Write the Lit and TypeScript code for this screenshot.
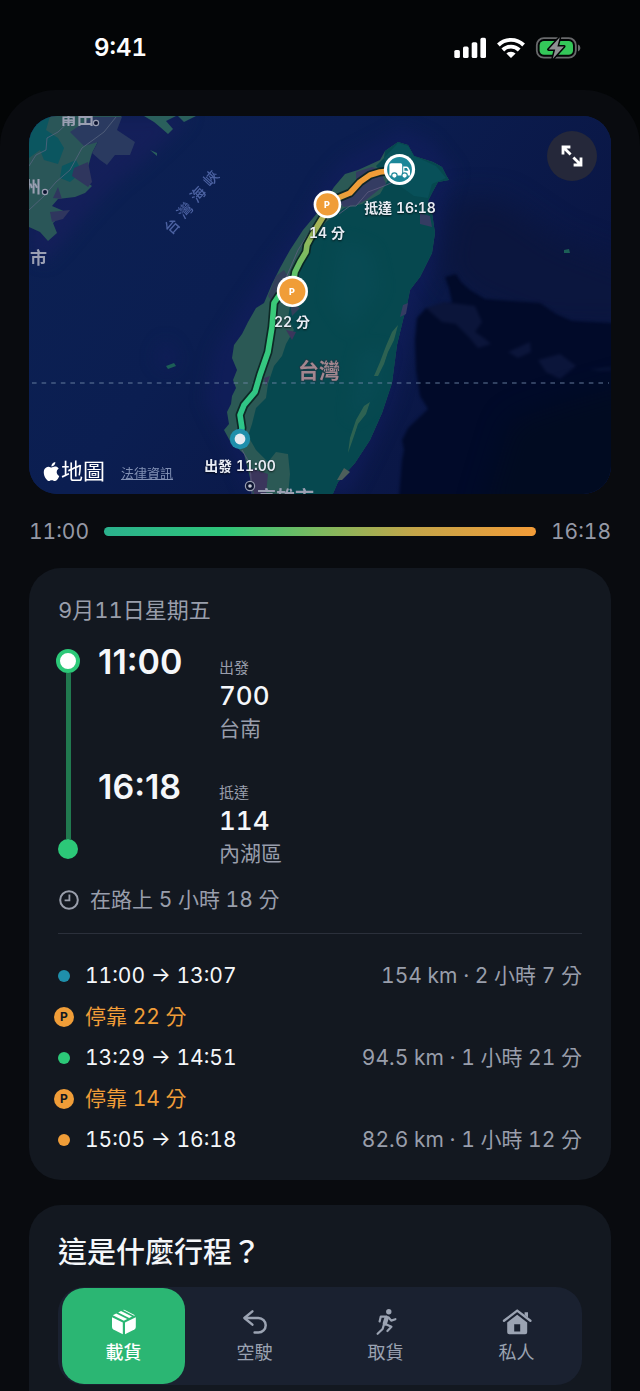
import { LitElement, html, svg, css } from 'lit';
import { customElement, state } from 'lit/decorators.js';
import { classMap } from 'lit/directives/class-map.js';

interface Stop {
  time: string;
  label: string;
  code: string;
  place: string;
}

interface Leg {
  kind: 'teal' | 'green' | 'orange' | 'pause';
  text: string;
  detail?: string;
}

const STOPS: Stop[] = [
  { time: '11:00', label: '出發', code: '700', place: '台南' },
  { time: '16:18', label: '抵達', code: '114', place: '內湖區' },
];

const LEGS: Leg[] = [
  { kind: 'teal', text: '11:00 → 13:07', detail: '154 km · 2 小時 7 分' },
  { kind: 'pause', text: '停靠 22 分' },
  { kind: 'green', text: '13:29 → 14:51', detail: '94.5 km · 1 小時 21 分' },
  { kind: 'pause', text: '停靠 14 分' },
  { kind: 'orange', text: '15:05 → 16:18', detail: '82.6 km · 1 小時 12 分' },
];

const boxIcon = svg`
  <g fill="currentColor">
    <path d="M3 10.2 13.8 15.6V27.2L4.4 22.4Q3 21.6 3 20Z" />
    <path d="M26.8 10.2 16 15.6V27.2L25.4 22.4Q26.8 21.6 26.8 20Z" />
    <path d="M3.8 8.2 7.2 6.4 18.2 12 14.9 13.7Z" />
    <path d="M9.2 5.4 12 4 23 9.6 20.2 11Z" />
    <path d="M14 3Q14.9 2.4 15.8 2.9L26 8.2 25 8.7Z" />
  </g>
`;

const backIcon = svg`
  <g fill="none" stroke="currentColor" stroke-width="2.5" stroke-linecap="round" stroke-linejoin="round">
    <path d="M12.4 4.4 4.4 11 12.4 17.6" />
    <path d="M5 11H18.4a7.2 7.2 0 0 1 0 14.6H14.6" />
  </g>
`;

const runIcon = svg`
  <circle cx="17.8" cy="4.8" r="2.7" fill="currentColor" />
  <g fill="none" stroke="currentColor" stroke-width="2.2" stroke-linecap="round" stroke-linejoin="round">
    <path d="M15.6 9.6H9.8L8.6 14.4" />
    <path d="M17.6 10.4 20.2 13.6 24.4 12.2" />
    <path d="M15.4 17.4 20.4 19.8 16.4 24" />
    <path d="M12.6 18.6 11.6 22 6.6 26.8" />
    <path d="M15.6 11 13.8 16.6" stroke-width="4.4" />
  </g>
`;

const homeIcon = svg`
  <path
    d="M2 13.8 15.2 3.6 28.4 13.8"
    fill="none"
    stroke="currentColor"
    stroke-width="2.4"
    stroke-linecap="round"
    stroke-linejoin="round"
  />
  <path d="M22.6 5.2H26V10.6L22.6 8Z" fill="currentColor" />
  <path
    fill="currentColor"
    fill-rule="evenodd"
    d="M15.2 7.8 25.2 15.4V25.2Q25.2 27.2 23.2 27.2H7.2Q5.2 27.2 5.2 25.2V15.4ZM12.2 17.2V24.4H18.2V17.2Z"
  />
`;

const KINDS = [
  { id: 'load', label: '載貨', icon: boxIcon },
  { id: 'empty', label: '空駛', icon: backIcon },
  { id: 'pickup', label: '取貨', icon: runIcon },
  { id: 'private', label: '私人', icon: homeIcon },
];

@customElement('status-bar')
export class StatusBar extends LitElement {
  static styles = css`
    :host {
      display: flex;
      align-items: center;
      justify-content: space-between;
      height: 90px;
      padding: 5px 59px 0 94px;
      box-sizing: border-box;
      color: #fff;
    }
    .clock {
      font-size: 24px;
      font-weight: 600;
      line-height: 30px;
    }
    .icons {
      display: flex;
      align-items: center;
      gap: 10px;
    }
    svg {
      display: block;
    }
  `;

  render() {
    return html`
      <time class="clock">9:41</time>
      <div class="icons">
        <svg width="33" height="22" viewBox="0 0 33 22" fill="#fff" role="img" aria-label="Signal">
          <rect x="0.3" y="13" width="5.6" height="8" rx="1.6" />
          <rect x="9" y="9.6" width="5.6" height="11.4" rx="1.6" />
          <rect x="17.7" y="5.2" width="5.6" height="15.8" rx="1.6" />
          <rect x="26.4" y="0.8" width="5.6" height="20.2" rx="1.6" />
        </svg>
        <svg width="28" height="22" viewBox="0 0 28 22" role="img" aria-label="Wi-Fi">
          <g fill="none" stroke="#fff" stroke-width="3.9">
            <path d="M1.4 8a18 18 0 0 1 25.2 0" />
            <path d="M5.8 13a11.6 11.6 0 0 1 16.4 0" />
          </g>
          <path d="M14 21 9.4 16.6a6.5 6.5 0 0 1 9.2 0Z" fill="#fff" />
        </svg>
        <svg width="46" height="24" viewBox="0 0 46 24" role="img" aria-label="Battery">
          <rect x="1.8" y="2.2" width="39" height="19.4" rx="7" fill="none" stroke="#68696b" stroke-width="1.8" />
          <path d="M43 8.6a3.6 3.6 0 0 1 0 6.8Z" fill="#68696b" />
          <rect x="4.6" y="5" width="33.4" height="13.8" rx="4.4" fill="#34c759" />
          <path
            d="M24.8 1.2 13.6 13.4H20.2L17.8 22.8 29 10.4H22.4Z"
            fill="#8e9092"
            stroke="#030506"
            stroke-width="3"
            stroke-linejoin="round"
            paint-order="stroke"
          />
        </svg>
      </div>
    `;
  }
}

@customElement('route-map')
export class RouteMap extends LitElement {
  static styles = css`
    :host {
      display: block;
      position: relative;
      overflow: hidden;
      border-radius: 28px;
      background: #0b1f50;
    }
    .canvas {
      display: block;
      width: 100%;
      height: auto;
    }
    .place {
      fill: #9a9fb2;
      font-size: 17px;
      font-weight: 600;
    }
    .city {
      font-size: 19px;
    }
    .strait {
      fill: #4c62a2;
      font-size: 15px;
      font-weight: 500;
      text-anchor: middle;
    }
    .island {
      fill: #a3868f;
      stroke: #173d48;
      stroke-width: 2px;
      paint-order: stroke;
      font-size: 21px;
      font-weight: 700;
      text-anchor: middle;
    }
    .pin {
      fill: #e8ecf4;
      font-size: 14px;
      font-weight: 600;
      text-anchor: middle;
      text-shadow: 0 1px 2px rgba(0, 0, 0, 0.7);
    }
    .letter {
      fill: #fff;
      font-size: 9px;
      font-weight: 800;
      text-anchor: middle;
    }
    .expand {
      position: absolute;
      top: 15px;
      right: 14px;
      width: 50px;
      height: 50px;
      padding: 0;
      border: 0;
      border-radius: 50%;
      background: #25283a;
      color: #fff;
      display: grid;
      place-items: center;
    }
    .credit {
      position: absolute;
      left: 14px;
      bottom: 6px;
      display: flex;
      align-items: center;
      gap: 16px;
      line-height: 30px;
    }
    .brand {
      display: flex;
      align-items: center;
      gap: 1px;
      color: #fff;
      font-size: 22px;
    }
    .legal {
      color: #8190b4;
      font-size: 13px;
      padding-top: 4px;
    }
    filter {
      color-interpolation-filters: sRGB;
    }
  `;

  private renderSea() {
    return svg`
      <rect x="29" y="116" width="582" height="378" fill="url(#sea)" />
      <g filter="url(#soft)">
        <path fill="#171f5c" opacity=".75" d="M29 116H190L170 138 140 165 118 182 100 200 80 222 62 244 45 262 29 250Z" />
        <path fill="#131d62" opacity=".5" d="M325 180 345 158 385 138 400 128 430 140 455 172 445 205 440 260 420 300 405 360 395 400 372 450 350 494H250L225 440 205 400 215 350 240 310 270 265 300 225Z" />
        <path fill="#131b5c" opacity=".5" d="M154 358 165 340 176 352 178 364 166 372Z" />
      </g>
      <g filter="url(#haze)">
        <path fill="#0b163e" d="M455 200 500 200 560 240 640 270V330L540 328 470 300 440 270Z" />
      </g>
      <g filter="url(#edge)">
        <path fill="#010a29" d="M445 277 456 274 461 282 470 290 485 299 510 301 540 303 556 314 572 321 630 324V510H398L402 460 404 450 402 440 408 428 428 409 420 396 416 370 415 340 417 318 426 308 452 302 449 288Z" />
        <path fill="#0b153a" d="M426 308 444 302 475 306 482 322 475 332 484 338 491 344 478 348 468 336 456 324 442 322Z" />
        <path fill="#0b153a" d="M508 352 530 342 531 352 518 358Z" />
        <path fill="#0b153a" d="M538 360 560 354 576 366 560 379 546 372Z" />
        <path fill="#0b153a" opacity=".7" d="M588 369 611 367V371L600 371Z" />
      </g>
      <path fill="#010c1e" opacity=".7" filter="url(#haze)" d="M510 420 570 400 640 380V520H480Z" />
    `;
  }

  private renderLand() {
    return svg`
      <path fill="#2a5658" d="M29 116H122L104 130 92 153 88 167 74 172 92 186 85 193 75 197 58 199 52 206 66 212 53 223 57 233 48 241 40 232 29 227Z" />
      <path fill="#0b5660" d="M29 116H50L46 130 58 138 64 148 58 164 44 160 40 150 29 158Z" />
      <path fill="#0b5660" d="M62 166 76 160 82 172 70 182 60 178Z" />
      <path fill="#2a3a60" d="M92 117H122L117 130 135 142 130 155 115 155 107 165 100 160 92 153 98 142 84 146 70 132Z" />
      <path fill="#2f365e" d="M74 168 88 162 92 182 88 187 72 176ZM53 198 58 187 62 199ZM50 212 70 210 63 219 52 222Z" />
      <path fill="#2a5f5c" d="M144 116H176L166 121 173 129 168 134 160 127 154 122ZM178 116H196L184 122ZM150 150 157 153 157 156Z" />
      <g fill="none" stroke="#57647f" stroke-width=".8">
        <path d="M29 166 36 155 46 150 47 138 58 132 74 117" />
        <path d="M29 210 44 196 56 182 70 170 82 148 104 132 116 117" />
      </g>

      <path
        fill="#2b5955"
        d="M398 142 408 145 414 156 433 162 442 167 446 175 449 180 438 182 432 193 428 201 432 213 435 233 432 253 420 277 410 290 407 305 403 320 397 345 392 383 382 413 370 440 355 463 338 482 332 496H253L250 478 244 454 230 441 224 430 229 424 227 412 231 404 232 396 236 388 233 380 237 370 232 358 234 345 242 334 248 322 256 308 264 303 272 284 280 268 290 250 303 230 318 212 334 187 345 174 358 170 380 160 385 151Z"
      />
      <path
        fill="#06484f"
        d="M398 142 408 145 414 156 433 162 442 167 446 175 449 180 438 182 432 193 428 201 432 213 435 233 432 253 420 277 410 290 407 305 403 320 397 345 392 383 382 413 370 440 355 463 338 482 332 496H288L290 474 288 454 276 452 268 462 256 450 248 436 252 424 256 408 266 398 268 384 274 366 282 356 286 344 294 330 288 318 290 306 296 290 300 270 306 256 312 240 326 222 344 208 362 204 380 194 388 180 376 166 384 158 385 151Z"
      />
      <path fill="#085059" d="M384 158 398 143 408 146 414 156 436 166 446 178 432 184 428 198 414 196 400 186 388 176Z" />
      <path fill="#343c62" d="M356 172 372 167 380 170 386 184 366 200 356 205 344 207 338 202 350 192 356 182Z" />
      <path fill="#343c62" d="M420 213 430 216 432 227 420 224ZM403 305 408 303 406 314 400 317Z" />
      <path fill="#33405a" d="M276 276 284 270 290 280 282 296 274 304 268 296ZM290 302 300 308 292 316Z" />
      <path fill="#3b365c" d="M286 330 296 332 292 340ZM264 378 270 376 266 386ZM250 468 268 474 266 494H254L250 478Z" />
      <path fill="#0a4d58" opacity=".5" d="M340 240 372 250 380 290 350 330 330 300ZM360 350 388 350 374 400 350 420Z" filter="url(#soft)" />
      <path fill="#3f6d53" d="M398 325 394 340 388 352 384 364 378 376 374 376 380 362 386 346 392 332Z" opacity=".7" />
      <path fill="#3f6d53" d="M370 402 366 414 358 424 354 436 348 453 350 438 356 420 364 406Z" opacity=".7" />
      <path fill="#4d5f5b" d="M337 480 344 468 350 472 342 480Z" />
      <g fill="none" stroke="#5f5d80" stroke-width=".8">
        <path d="M339 214 350 206 356 206 368 192 384 186 398 180" />
        <path d="M316 222 298 250 286 278" />
        <path d="M242 450 250 464 252 494" />
      </g>
      <path fill="#1c5f56" d="M166 366 174 363 176 366 168 369ZM564 250 569 249 570 253 564 253Z" />
    `;
  }

  private renderLabels() {
    return svg`
      <text class="place" x="60" y="124">莆田</text>
      <text class="place" x="24" y="193">州</text>
      <text class="place" x="30" y="264">市</text>
      <text class="place city" x="257" y="505">高雄市</text>
      <g fill="#0c1430" stroke="#9a9fb2" stroke-width="1.2">
        <circle cx="96" cy="123" r="2.6" />
        <circle cx="45" cy="192" r="2.6" />
        <circle cx="250" cy="486" r="4.6" />
      </g>
      <circle cx="250" cy="486" r="1.8" fill="#c4c8d4" />
      <text class="strait" transform="translate(176 230) rotate(-48)">台</text>
      <text class="strait" transform="translate(189 214) rotate(-48)">灣</text>
      <text class="strait" transform="translate(202 198) rotate(-48)">海</text>
      <text class="strait" transform="translate(215 182) rotate(-48)">峽</text>
      <text class="island" x="319" y="378">台灣</text>
      <path d="M32 383H609" stroke="#6f86a6" stroke-width="1.4" stroke-dasharray="4.6 5" opacity=".6" />
    `;
  }

  private renderRoute() {
    const path =
      'M240 439 242 428 240 415 244 405 255 392 260 375 268 352 272 327 274 303 280 294 292 291 ' +
      '295 272 300 262 306 252 307 245 315 230 323 217 327 204 338 198 350 193 360 182 370 175 380 172 399 170';
    return svg`
      <path d="${path}" fill="none" stroke="#08211f" stroke-width="9" stroke-linejoin="round" opacity=".85" />
      <path d="${path}" fill="none" stroke="url(#route)" stroke-width="5.6" stroke-linejoin="round" />

      <circle cx="240" cy="439" r="10.2" fill="#1f8fab" />
      <circle cx="240" cy="439" r="5.4" fill="#e6ebf0" />

      <circle cx="292.4" cy="291.4" r="15.6" fill="#fff" />
      <circle cx="292.4" cy="291.4" r="13" fill="#f09d38" />
      <text class="letter" x="292" y="295">P</text>

      <circle cx="327.4" cy="204.4" r="13.8" fill="#fff" />
      <circle cx="327.4" cy="204.4" r="11.2" fill="#f09d38" />
      <text class="letter" x="327" y="208">P</text>

      <circle cx="399.5" cy="169.5" r="15.6" fill="#fff" />
      <circle cx="399.5" cy="169.5" r="12.4" fill="#1c8799" />
      <g fill="#fff">
        <path d="M389.4 165Q389.4 163.2 391.2 163.2H400.6Q402.2 163.2 402.2 165V175.6H389.4Z" />
        <path fill-rule="evenodd" d="M403.2 166.6H406.4Q407.6 166.6 408.4 167.6L410 170.4V175.6H403.2ZM404.4 168V170.8H408.4L406.8 168Z" />
      </g>
      <g fill="#fff" stroke="#1c8799" stroke-width="1.1">
        <circle cx="394.4" cy="175.6" r="2.7" />
        <circle cx="404.6" cy="175.6" r="2.7" />
      </g>

      <text class="pin" x="400" y="213">抵達 16:18</text>
      <text class="pin" x="327" y="238">14 分</text>
      <text class="pin" x="292" y="327">22 分</text>
      <text class="pin" x="240" y="471">出發 11:00</text>
    `;
  }

  render() {
    return html`
      <svg class="canvas" viewBox="29 116 582 378" role="img" aria-label="台灣">
        <defs>
          <linearGradient id="sea" x1="0" y1="0" x2="1" y2="0.5">
            <stop offset="0" stop-color="#0c2153" />
            <stop offset="0.45" stop-color="#0b1e51" />
            <stop offset="1" stop-color="#0a1543" />
          </linearGradient>
          <linearGradient id="route" gradientUnits="userSpaceOnUse" x1="240" y1="439" x2="350" y2="193">
            <stop offset="0" stop-color="#2cc48a" />
            <stop offset="0.55" stop-color="#3ccb77" />
            <stop offset="0.7" stop-color="#77bd62" />
            <stop offset="0.86" stop-color="#a9b356" />
            <stop offset="1" stop-color="#f09d38" />
          </linearGradient>
          <filter id="haze" x="-30%" y="-30%" width="160%" height="160%"><feGaussianBlur stdDeviation="14" /></filter>
          <filter id="soft" x="-30%" y="-30%" width="160%" height="160%"><feGaussianBlur stdDeviation="8" /></filter>
          <filter id="edge"><feGaussianBlur stdDeviation="1.4" /></filter>
        </defs>
        ${this.renderSea()} ${this.renderLand()} ${this.renderLabels()} ${this.renderRoute()}
      </svg>
      <button class="expand" aria-label="展開地圖">
        <svg width="24" height="24" viewBox="0 0 24 24" fill="none" stroke="currentColor" stroke-width="2.8">
          <path d="M3 10.4V3H10.4M3 3 10.6 10.6" />
          <path d="M21 13.6V21H13.6M21 21 13.4 13.4" />
        </svg>
      </button>
      <div class="credit">
        <span class="brand">
          <svg width="17" height="19" viewBox="2 0 20 24" fill="currentColor" aria-hidden="true">
            <path
              d="M12.152 6.896c-.948 0-2.415-1.078-3.96-1.04-2.04.027-3.91 1.183-4.961 3.014-2.117 3.675-.546 9.103 1.519 12.09 1.013 1.454 2.208 3.09 3.792 3.039 1.52-.065 2.09-.987 3.935-.987 1.831 0 2.35.987 3.96.948 1.637-.026 2.676-1.48 3.676-2.948 1.156-1.688 1.636-3.325 1.662-3.415-.039-.013-3.182-1.221-3.22-4.857-.026-3.04 2.48-4.494 2.597-4.559-1.429-2.09-3.623-2.324-4.39-2.376-2-.156-3.675 1.09-4.61 1.09zM15.53 3.83c.843-1.012 1.4-2.427 1.245-3.83-1.207.052-2.662.805-3.532 1.818-.78.896-1.454 2.338-1.273 3.714 1.338.104 2.715-.688 3.559-1.701"
            />
          </svg>
          地圖
        </span>
        <a class="legal" href="#legal">法律資訊</a>
      </div>
    `;
  }
}

@customElement('trip-card')
export class TripCard extends LitElement {
  static styles = css`
    :host {
      display: block;
      padding: 28px 29px 20px;
      border-radius: 32px;
      background: #131820;
      color: #f5f7fa;
      font-size: 21px;
      line-height: 28px;
    }
    ol,
    ul {
      list-style: none;
      margin: 0;
      padding: 0;
    }
    .muted {
      color: #999eab;
    }
    .date {
      font-size: 22px;
    }
    .trip {
      display: flex;
      gap: 20px;
      margin-top: 21px;
    }
    .rail {
      display: flex;
      flex-direction: column;
      align-items: center;
      width: 20px;
      padding: 4px 0 11px;
    }
    .from {
      width: 16px;
      height: 16px;
      border: 4px solid #2cc878;
      border-radius: 50%;
      background: #fff;
    }
    .line {
      flex: 1;
      width: 5px;
      background: #21794f;
    }
    .to {
      width: 20px;
      height: 20px;
      border-radius: 50%;
      background: #2cc878;
    }
    .stops {
      display: grid;
      gap: 25px;
    }
    .stop {
      display: grid;
      grid-template-columns: 121px auto;
    }
    .time {
      font-size: 34px;
      font-weight: 600;
      line-height: 34px;
      font-variant-numeric: normal;
    }
    .where {
      display: flex;
      flex-direction: column;
      padding-top: 12px;
    }
    .label {
      font-size: 15px;
      line-height: 22px;
    }
    .code {
      font-size: 26px;
      font-weight: 500;
      line-height: 34px;
    }
    .town {
      line-height: 32px;
    }
    .duration {
      display: flex;
      align-items: center;
      gap: 10px;
      margin-top: 16px;
    }
    .legs {
      margin-top: 19px;
      padding-top: 21px;
      border-top: 1px solid #2b303b;
    }
    .leg {
      display: flex;
      align-items: center;
      gap: 11px;
      height: 41px;
      margin-left: -4px;
    }
    .mark {
      display: grid;
      place-items: center;
      width: 20px;
      height: 20px;
    }
    .mark::before {
      content: '';
      width: 12px;
      height: 12px;
      border-radius: 50%;
      background: #1f8fab;
    }
    .green .mark::before {
      background: #2cc878;
    }
    .orange .mark::before {
      background: #f09d38;
    }
    .pause {
      color: #f09d38;
    }
    .pause .mark {
      border-radius: 50%;
      background: #f09d38;
      color: #131820;
      font-size: 12px;
      font-weight: 700;
      line-height: 20px;
    }
    .pause .mark::before {
      content: none;
    }
    .detail {
      margin-left: auto;
    }
  `;

  render() {
    return html`
      <div class="date muted">9月11日星期五</div>
      <div class="trip">
        <div class="rail">
          <span class="from"></span>
          <span class="line"></span>
          <span class="to"></span>
        </div>
        <ol class="stops">
          ${STOPS.map(
            (stop) => html`
              <li class="stop">
                <time class="time">${stop.time}</time>
                <div class="where">
                  <span class="label muted">${stop.label}</span>
                  <span class="code">${stop.code}</span>
                  <span class="town muted">${stop.place}</span>
                </div>
              </li>
            `
          )}
        </ol>
      </div>
      <div class="duration muted">
        <svg width="22" height="22" viewBox="0 0 22 22" fill="none" stroke="currentColor" stroke-width="2">
          <circle cx="11" cy="11" r="8.8" />
          <path d="M11.4 5.6V11.4H6.6" stroke-width="1.8" />
        </svg>
        在路上 5 小時 18 分
      </div>
      <ul class="legs">
        ${LEGS.map(
          (leg) => html`
            <li class="leg ${leg.kind}">
              <span class="mark">${leg.kind === 'pause' ? 'P' : ''}</span>
              <span>${leg.text}</span>
              ${leg.detail ? html`<span class="detail muted">${leg.detail}</span>` : ''}
            </li>
          `
        )}
      </ul>
    `;
  }
}

@customElement('kind-card')
export class KindCard extends LitElement {
  static styles = css`
    :host {
      display: block;
      padding: 29px 29px 6px;
      border-radius: 32px 32px 0 0;
      background: #131820;
      color: #f5f7fa;
    }
    h2 {
      margin: 0 0 15px;
      font-size: 29px;
      font-weight: 500;
      line-height: 38px;
    }
    .kinds {
      display: grid;
      grid-template-columns: repeat(4, 1fr);
      border-radius: 26px;
      background: #1a2130;
    }
    .kind {
      display: flex;
      flex-direction: column;
      align-items: center;
      justify-content: center;
      gap: 3px;
      height: 96px;
      margin: 1px 4px;
      padding: 0;
      border: 0;
      border-radius: 22px;
      background: none;
      color: #9ba3b2;
      font: inherit;
      font-size: 18px;
      line-height: 26px;
    }
    .active {
      background: #2bb673;
      color: #fff;
      font-weight: 500;
    }
  `;

  @state() private selected = 'load';

  render() {
    return html`
      <h2>這是什麼行程？</h2>
      <div class="kinds">
        ${KINDS.map(
          (kind) => html`
            <button
              class=${classMap({ kind: true, active: this.selected === kind.id })}
              aria-pressed=${this.selected === kind.id}
              @click=${() => (this.selected = kind.id)}
            >
              <svg width="30" height="30" viewBox="0 0 30 30" aria-hidden="true">${kind.icon}</svg>
              ${kind.label}
            </button>
          `
        )}
      </div>
    `;
  }
}

@customElement('app-root')
export class AppRoot extends LitElement {
  static styles = css`
    :host {
      display: flex;
      flex-direction: column;
      min-height: 100vh;
      background: #030506;
      font-family: Inter, 'Noto Sans CJK TC', sans-serif;
      font-variant-numeric: tabular-nums;
    }
    .sheet {
      flex: 1;
      display: flex;
      flex-direction: column;
      padding: 26px 29px 0;
      border-radius: 56px 56px 0 0;
      background: #090b0f;
    }
    .span {
      display: flex;
      align-items: center;
      gap: 15px;
      height: 74px;
      color: #9599a6;
      font-size: 21px;
    }
    .bar {
      flex: 1;
      height: 9px;
      border-radius: 5px;
      background: linear-gradient(90deg, #2bb18d, #2fc57a 28%, #7db95f 50%, #c4a549 72%, #f39c38);
    }
    kind-card {
      flex: 1;
      margin-top: 25px;
    }
  `;

  render() {
    return html`
      <status-bar></status-bar>
      <main class="sheet">
        <route-map></route-map>
        <div class="span">
          <time>11:00</time>
          <div class="bar"></div>
          <time>16:18</time>
        </div>
        <trip-card></trip-card>
        <kind-card></kind-card>
      </main>
    `;
  }
}
